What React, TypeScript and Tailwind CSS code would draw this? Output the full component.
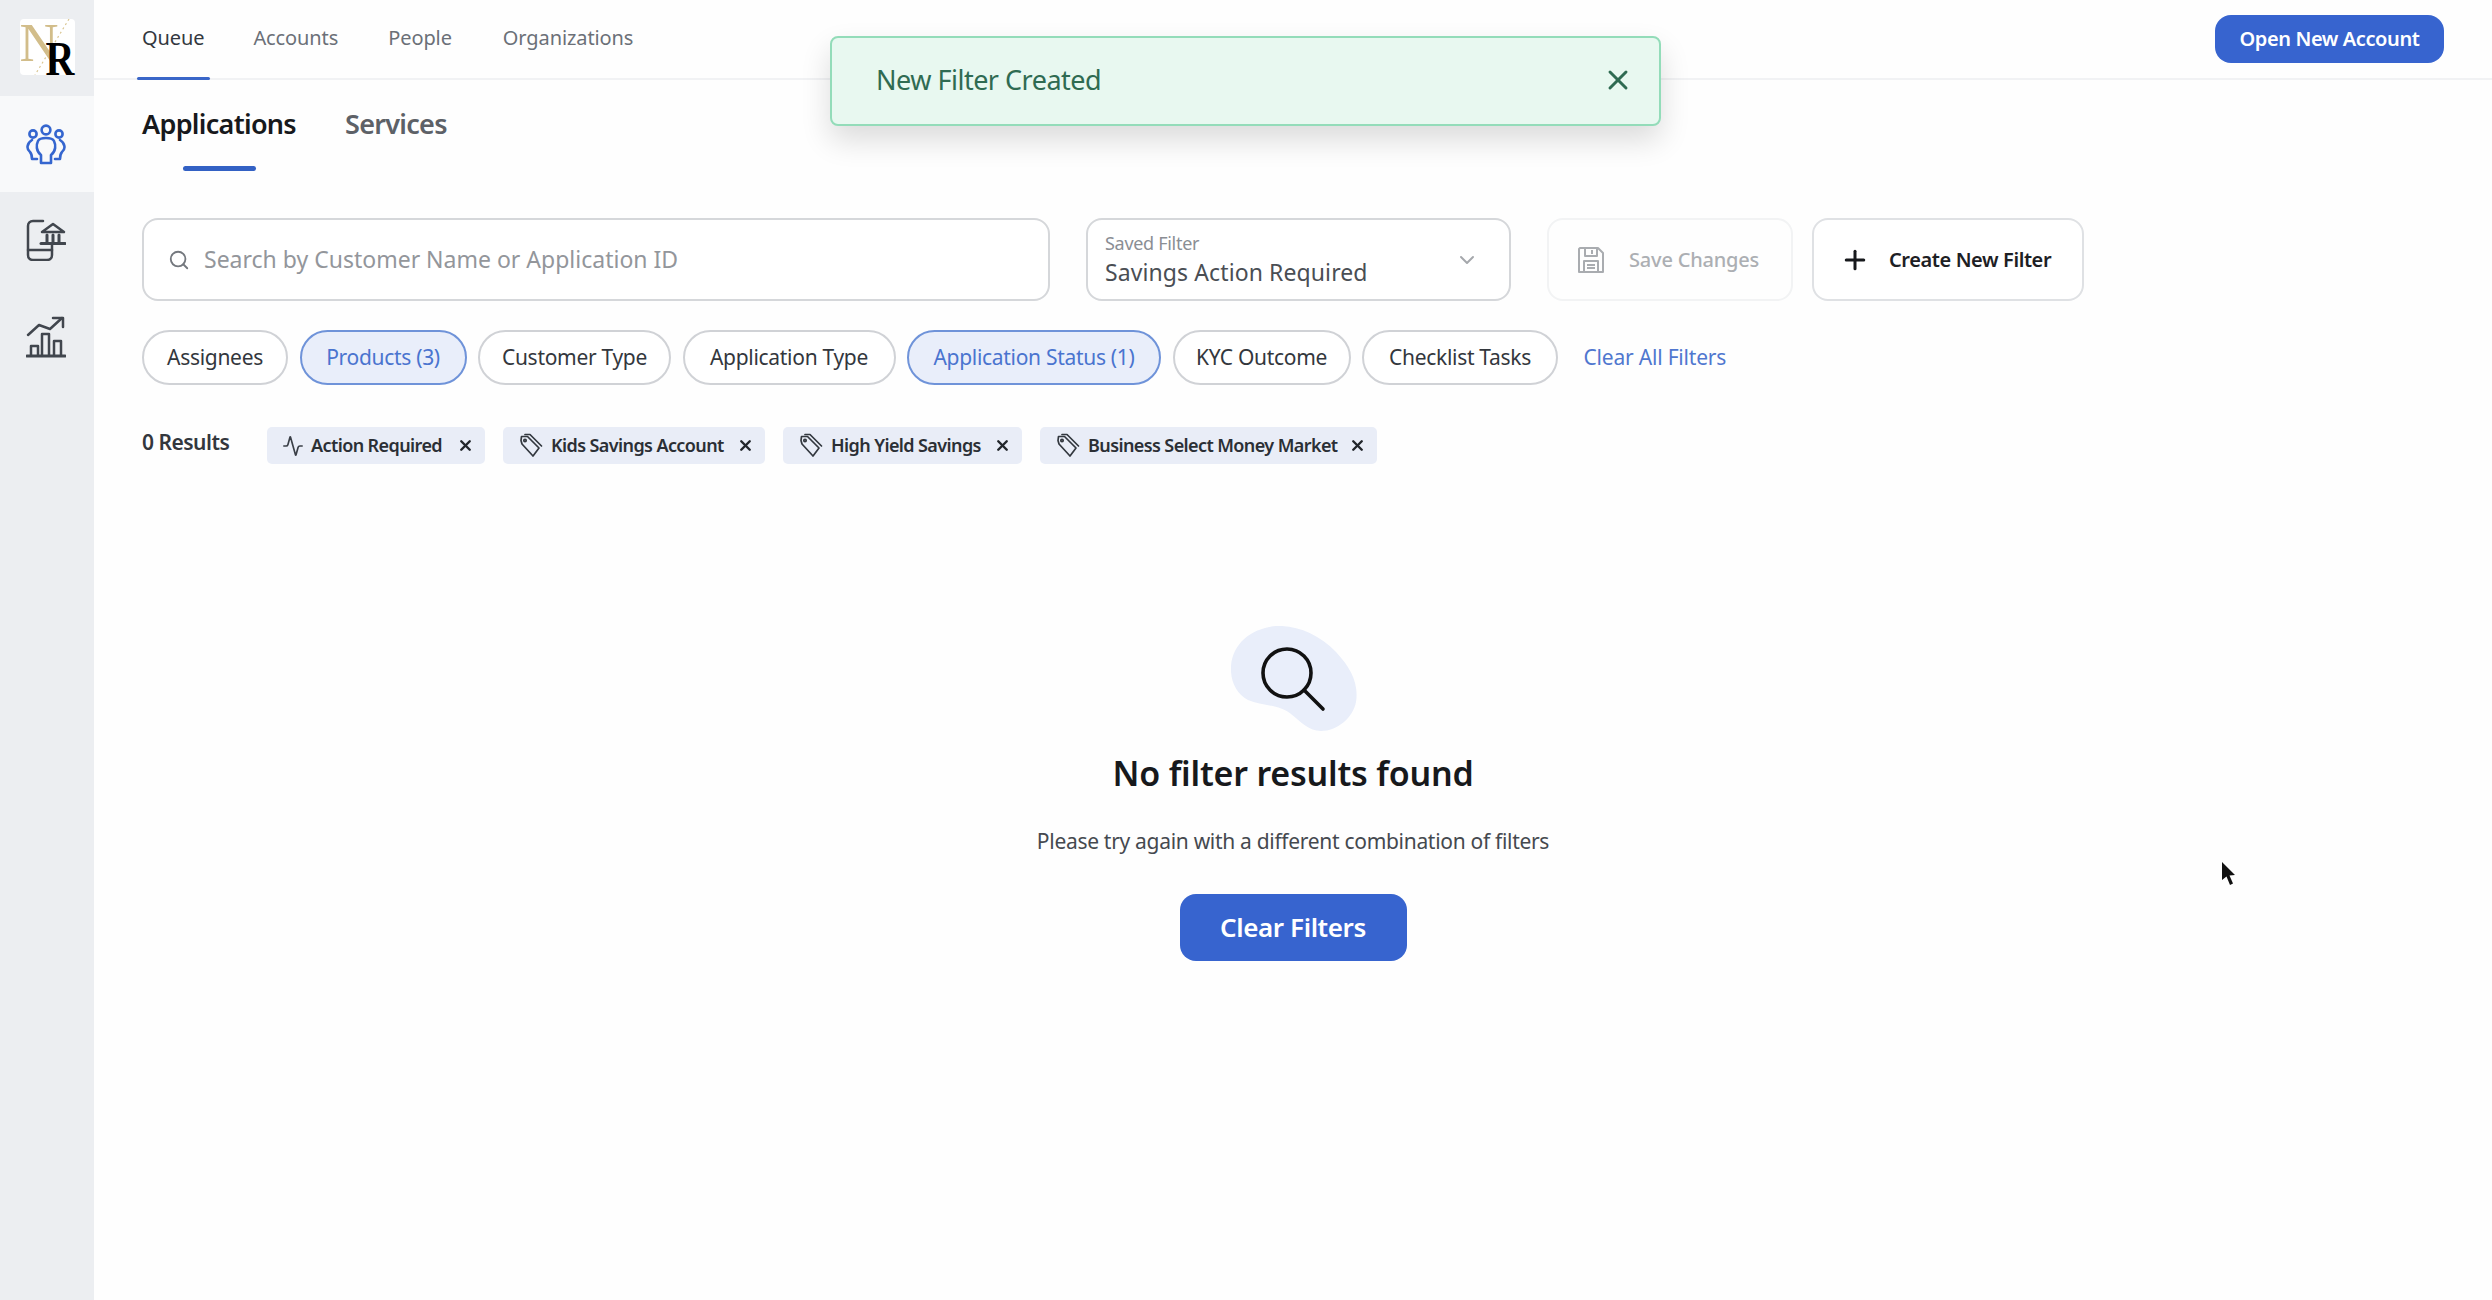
import { Search, X, Plus, ChevronDown, Activity } from "lucide-react";

const font = { fontFamily: '"Noto Sans", sans-serif' };

function TagIcon() {
  return (
    <svg width="26" height="26" viewBox="0 0 26 26" fill="none" stroke="#33383f" strokeWidth="1.7" strokeLinejoin="round" strokeLinecap="round">
      <path d="M3 7.5 L3.5 3.5 L9.5 3.5 L21 15 L15 23 L4 11 Z" />
      <path d="M7 1.5 L12 1.5 L23.5 13" />
      <circle cx="7" cy="7.5" r="1.2" />
    </svg>
  );
}

function SaveIcon() {
  return (
    <svg width="28" height="30" viewBox="0 0 28 30" fill="none" stroke="#a9acb0" strokeWidth="2" strokeLinejoin="round">
      <path d="M3 3 H21 L26 8 V27 H2 V4 Z" />
      <path d="M8 3 V11 H20 V3" />
      <path d="M15 5 V9" />
      <path d="M7 27 V16 H21 V27" />
      <path d="M10 20 H18 M10 23 H18" />
    </svg>
  );
}

function PeopleIcon() {
  return (
    <svg width="40" height="41" viewBox="0 0 40 41" fill="none" stroke="#3566cf" strokeWidth="2.6" strokeLinecap="round" strokeLinejoin="round">
      <circle cx="20" cy="6" r="4.4" />
      <circle cx="7" cy="10" r="3.6" />
      <circle cx="33" cy="10" r="3.6" />
      <path d="M15 39 H25 V31 C30 27 30 21 28 17 C26 13 14 13 12 17 C10 21 10 27 15 31 Z" />
      <path d="M6 16 C1 19 0 25 4 28 C6 30 6 32 6 35 H11" />
      <path d="M34 16 C39 19 40 25 36 28 C34 30 34 32 34 35 H29" />
    </svg>
  );
}

function BankIcon() {
  return (
    <svg width="40" height="42" viewBox="0 0 40 42" fill="none" stroke="#41464e" strokeWidth="2.5" strokeLinecap="round" strokeLinejoin="round">
      <path d="M17 2 H7 C4 2 2 4 2 7 V36 C2 39 4 41 7 41 H21 C24 41 26 39 26 36 V25" />
      <path d="M2 31 H26" />
      <path d="M16 13 L27 5 L38 13 Z" />
      <path d="M21 16 V23 M27 16 V23 M33 16 V23" strokeWidth="3" />
      <path d="M15 24.5 H39" strokeWidth="3" />
    </svg>
  );
}

function ChartIcon() {
  return (
    <svg width="40" height="42" viewBox="0 0 40 42" fill="none" stroke="#41464e" strokeWidth="2.5" strokeLinecap="round" strokeLinejoin="round">
      <path d="M2 19 L13 9 L24 13 L36 2" />
      <path d="M27 2 H37 V11" />
      <path d="M1 40 H39" strokeWidth="3" />
      <path d="M5 39 V30 H12 V39" />
      <path d="M16 39 V18 H23 V39" />
      <path d="M28 39 V25 H35 V39" />
    </svg>
  );
}

const pills: { t: string; w: string; on?: boolean }[] = [
  { t: "Assignees", w: "w-[146px]" },
  { t: "Products (3)", w: "w-[167px]", on: true },
  { t: "Customer Type", w: "w-[193px]" },
  { t: "Application Type", w: "w-[213px]" },
  { t: "Application Status (1)", w: "w-[254px]", on: true },
  { t: "KYC Outcome", w: "w-[178px]" },
  { t: "Checklist Tasks", w: "w-[196px]" },
];

const tags = [
  { t: "Action Required", w: "w-[218px]", a: true },
  { t: "Kids Savings Account", w: "w-[262px]" },
  { t: "High Yield Savings", w: "w-[239px]" },
  { t: "Business Select Money Market", w: "w-[337px]" },
];

export default function App() {
  return (
    <div style={font} className="relative flex h-[1300px] w-full overflow-hidden bg-[#fefefe]">
      <aside className="flex h-full w-[94px] shrink-0 flex-col bg-[#eceef1]">
        <div className="flex h-[96px] items-start justify-center pt-[19px]">
          <div className="relative h-[56px] w-[55px] rounded-[4px] bg-white">
            <span style={{ fontFamily: '"Liberation Serif", serif' }} className="absolute left-[0px] top-[-3px] text-[54px] leading-[54px] text-[#d2bd8a]">N</span>
            <svg className="absolute left-0 top-0" width="55" height="56" fill="none" stroke="#d9c590" strokeWidth="1.2" strokeDasharray="2 3">
              <path d="M49 0 L15 56" />
            </svg>
            <span style={{ fontFamily: '"Liberation Serif", serif' }} className="absolute right-[0px] bottom-[-2px] scale-y-[1.2] text-[40px] font-bold leading-[36px] text-black">R</span>
          </div>
        </div>
        <div className="flex h-[96px] items-center justify-center bg-[#f8f9fa] pr-[3px]"><PeopleIcon /></div>
        <div className="flex h-[96px] items-center justify-center pr-[3px]"><BankIcon /></div>
        <div className="flex h-[96px] items-center justify-center pr-[3px] pt-[2px]"><ChartIcon /></div>
      </aside>

      <main className="min-w-0 flex-1">
        <nav className="flex h-[80px] items-start justify-between border-b-2 border-[#f1f2f4] pl-[48px] pr-[48px]">
          <div className="flex gap-[49px] pt-[22px] text-[20px] leading-[32px] tracking-[-0.1px] text-[#6b7078]">
            <span className="relative text-[#33383f]">
              Queue
              <span className="absolute bottom-[-26px] left-[-5px] right-[-6px] h-[3px] rounded-full bg-[#3a66c8]" />
            </span>
            <span>Accounts</span>
            <span className="ml-[1px]">People</span>
            <span className="ml-[2px]">Organizations</span>
          </div>
          <button className="mt-[15px] h-[48px] w-[229px] rounded-[16px] bg-[#3764cf] text-[20px] font-semibold tracking-[-0.4px] text-white">Open New Account</button>
        </nav>

        <div className="pl-[48px]">
          <div className="flex gap-[49px] pt-[24px] text-[27px] font-semibold leading-[40px] tracking-[-0.7px]">
            <span className="relative text-[#17191c]">
              Applications
              <span className="absolute bottom-[-27px] left-[41px] h-[5px] w-[73px] rounded-full bg-[#3361c4]" />
            </span>
            <span className="text-[#5d6167]">Services</span>
          </div>

          <div className="mt-[74px] flex h-[83px] items-stretch">
            <div className="flex w-[908px] items-center rounded-[16px] border-2 border-[#d5d7da] bg-white pl-[24px]">
              <Search size={22} className="text-[#74787e]" strokeWidth={2} />
              <span className="ml-[14px] text-[23px] tracking-[0px] text-[#93969b]">Search by Customer Name or Application ID</span>
            </div>
            <div className="ml-[36px] flex w-[425px] items-center justify-between rounded-[16px] border-2 border-[#d5d7da] bg-white pl-[17px] pr-[30px]">
              <div className="flex flex-col">
                <span className="-translate-y-[2px] text-[18px] leading-[24px] tracking-[-0.3px] text-[#8a8e94]">Saved Filter</span>
                <span className="text-[23px] leading-[30px] tracking-[0.1px] text-[#4a4e54]">Savings Action Required</span>
              </div>
              <ChevronDown size={24} className="text-[#a5a8ac]" strokeWidth={2} />
            </div>
            <div className="ml-[36px] flex w-[246px] items-center gap-[24px] rounded-[16px] border-2 border-[#f2f3f4] pl-[28px]">
              <SaveIcon />
              <span className="text-[20px] font-medium tracking-[-0.2px] text-[#acafb3]">Save Changes</span>
            </div>
            <div className="ml-[19px] flex w-[272px] items-center gap-[19px] rounded-[16px] border-2 border-[#dfe1e4] bg-white pl-[26px]">
              <Plus size={30} strokeWidth={2.4} className="text-[#17191c]" />
              <span className="text-[20px] font-semibold tracking-[-0.4px] text-[#1d2024]">Create New Filter</span>
            </div>
          </div>

          <div className="mt-[29px] flex h-[55px] items-center gap-[11.5px]">
            {pills.map((p) => (
              <div
                key={p.t}
                className={
                  p.on
                    ? `flex h-full ${p.w} items-center justify-center rounded-full border-2 border-[#6f93d9] bg-[#e9eefa] text-[21px] tracking-[-0.3px] text-[#4a74cf]`
                    : `flex h-full ${p.w} items-center justify-center rounded-full border-2 border-[#d0d2d6] bg-white text-[21px] tracking-[-0.3px] text-[#33373d]`
                }
              >
                {p.t}
              </div>
            ))}
            <span className="ml-[14px] text-[21px] tracking-[-0.2px] text-[#5077cf]">Clear All Filters</span>
          </div>

          <div className="mt-[42px] flex h-[37px] items-center">
            <span className="mb-[6px] w-[125px] text-[21px] font-semibold tracking-[-0.5px] text-[#33373d]">0 Results</span>
            <div className="flex gap-[18px]">
              {tags.map((t) => (
                <div key={t.t} className={`flex h-[37px] ${t.w} items-center gap-[7px] rounded-[5px] bg-[#e9edf7] pl-[15px] text-[18px] font-semibold tracking-[-0.6px] text-[#2b2f35]`}>
                  {t.a ? <Activity size={22} strokeWidth={1.8} className="text-[#3a3f47]" /> : <TagIcon />}
                  <span className="whitespace-nowrap">{t.t}</span>
                  <X size={17} strokeWidth={3.4} className="ml-auto mr-[11px] text-[#22262b]" />
                </div>
              ))}
            </div>
          </div>

          <div className="ml-[-48px] mt-[162px] flex w-[2398px] flex-col items-center">
            <svg className="ml-[4px]" width="128" height="106" viewBox="0 0 128 106" fill="none">
              <path d="M45 0 C65 -1 88 8 105 26 C120 42 128 58 125 76 C122 92 106 105 90 105 C78 105 70 96 60 88 C48 78 30 80 17 74 C5 68 -1 54 0 40 C2 16 22 2 45 0 Z" fill="#e9eefa" />
              <circle cx="56" cy="47" r="24" stroke="#111" strokeWidth="3.6" />
              <path d="M73 64 L92 83" stroke="#111" strokeWidth="3.6" strokeLinecap="round" />
            </svg>
            <h2 className="mt-[18px] text-[34px] font-semibold leading-[46px] tracking-[-0.2px] text-[#17191c]">No filter results found</h2>
            <p className="mt-[29px] text-[21px] leading-[32px] tracking-[-0.3px] text-[#45494f]">Please try again with a different combination of filters</p>
            <button className="mt-[37px] h-[67px] w-[227px] rounded-[16px] bg-[#3764cf] text-[26px] font-semibold tracking-[-0.4px] text-white">Clear Filters</button>
          </div>
        </div>
      </main>

      <div className="absolute left-[830px] top-[36px] flex h-[90px] w-[831px] items-center justify-between rounded-[8px] border-2 border-[#93dcb9] bg-[#e8f8f0] pl-[44px] pr-[25px] pb-[2px] shadow-[0_14px_30px_rgba(0,0,0,0.14)]">
        <span className="text-[27px] tracking-[-0.5px] text-[#2f6b52]">New Filter Created</span>
        <X size={32} strokeWidth={2.2} className="text-[#2f6b52]" />
      </div>

      <svg className="absolute left-[2220px] top-[861px]" width="18" height="27" viewBox="0 0 18 27" fill="#111">
        <path d="M2 1 L2 19 L6.5 15.5 L10 24 L13 22.5 L9.5 14.5 L15 14 Z" />
      </svg>
    </div>
  );
}
